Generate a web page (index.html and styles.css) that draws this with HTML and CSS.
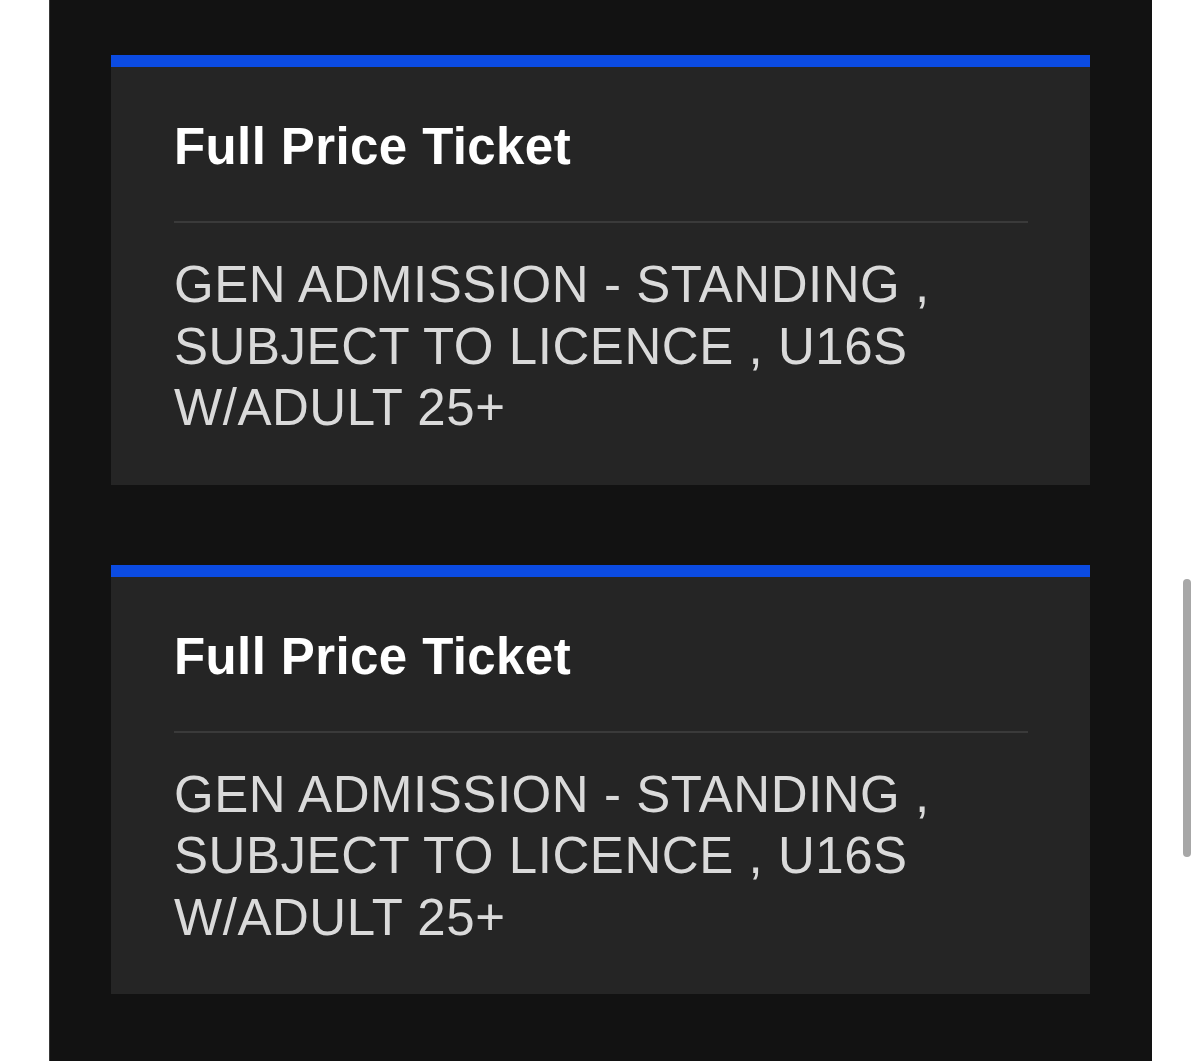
FILE: index.html
```html
<!DOCTYPE html>
<html lang="en">
<head>
<meta charset="utf-8">
<title>Tickets</title>
<link rel="stylesheet" href="styles.css">
</head>
<body>
<div class="page">
  <main class="panel">
    <section class="ticket">
      <h2 class="ticket-title">Full Price Ticket</h2>
      <hr class="ticket-divider">
      <p class="ticket-desc">GEN ADMISSION - STANDING , SUBJECT TO LICENCE , U16S W/ADULT 25+</p>
    </section>
    <section class="ticket">
      <h2 class="ticket-title">Full Price Ticket</h2>
      <hr class="ticket-divider">
      <p class="ticket-desc">GEN ADMISSION - STANDING , SUBJECT TO LICENCE , U16S W/ADULT 25+</p>
    </section>
  </main>
  <div class="scroll-thumb"></div>
</div>
</body>
</html>
```
FILE: styles.css
```css
html, body {
  margin: 0;
  padding: 0;
  background: #ffffff;
  height: 100%;
  overflow: hidden;
}
.page {
  position: relative;
  height: 1061px;
}
.panel {
  margin-left: 49px;
  width: 1103px;
  height: 1061px;
  box-sizing: border-box;
  background: #121212;
  border-left: 1px solid #3a3a3a;
  padding: 55px 62px 0 61px;
  display: flex;
  flex-direction: column;
  gap: 80px;
  font-family: "Liberation Sans", Arial, sans-serif;
}
.ticket {
  background: #252525;
  border-top: 12px solid #0b4be2;
  padding: 50px 62px 46px 63px;
}
.ticket-title {
  margin: 0;
  color: #ffffff;
  font-size: 51px;
  line-height: 60px;
  font-weight: 700;
  letter-spacing: 0.4px;
}
.ticket-divider {
  margin: 44px 0 0 0;
  border: 0;
  height: 2px;
  background: #3a3a3a;
}
.ticket-desc {
  margin: 31px 0 0 0;
  color: #dadada;
  font-size: 51px;
  line-height: 61.5px;
  font-weight: 400;
  letter-spacing: 0.55px;
}
.scroll-thumb {
  position: absolute;
  left: 1183px;
  top: 579px;
  width: 8px;
  height: 278px;
  border-radius: 4px;
  background: #a7a7a7;
}
```
